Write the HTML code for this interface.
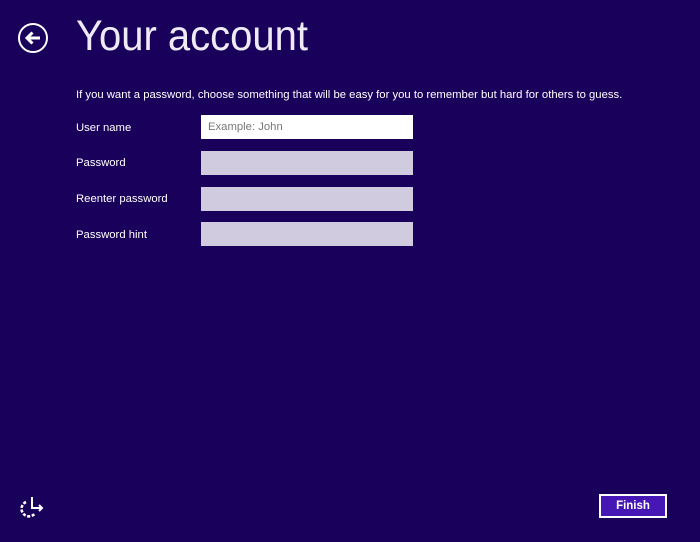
<!DOCTYPE html>
<html><head><style>
body{margin:0;width:700px;height:542px;background:#19005a;font-family:"Liberation Sans",sans-serif;color:#fff;position:relative;overflow:hidden}
.a{position:absolute}
h1{position:absolute;left:76px;top:12px;margin:0;font-weight:normal;font-size:43px;transform:scaleX(0.93);transform-origin:left top;color:#eeeaf6}
.l{position:absolute;left:76px;font-size:11.3px}
.f{position:absolute;left:201px;width:212px;height:24px;background:#d1cbe0}
</style></head><body>
<svg class="a" style="left:17px;top:22px" width="32" height="32" viewBox="0 0 32 32"><circle cx="16" cy="16" r="14" fill="none" stroke="#fff" stroke-width="2"/><path d="M23 16H10M15.5 10.5L10 16l5.5 5.5" fill="none" stroke="#fff" stroke-width="3"/></svg>
<h1>Your account</h1>
<div class="l" style="top:89px">If you want a password, choose something that will be easy for you to remember but hard for others to guess.</div>
<div class="l" style="top:122px">User name</div>
<div class="l" style="top:157px">Password</div>
<div class="l" style="top:193px">Reenter password</div>
<div class="l" style="top:229px">Password hint</div>
<div class="f" style="top:115px;background:#fff;color:#777;font-size:11.3px;line-height:25px;box-sizing:border-box;padding-left:7px">Example: John</div>
<div class="f" style="top:151px"></div>
<div class="f" style="top:187px"></div>
<div class="f" style="top:222px"></div>
<svg class="a" style="left:20px;top:494px" width="26" height="26" viewBox="0 0 26 26"><path d="M6 8A7.5 7.5 0 1 0 14.5 20" fill="none" stroke="#fff" stroke-width="2.6" stroke-dasharray="3 1.6"/><path d="M12 3V14H22M19 11l3 3-3 3" fill="none" stroke="#fff" stroke-width="2"/></svg>
<div class="a" style="left:599px;top:494px;width:68px;height:24px;box-sizing:border-box;border:2px solid #fff;background:#4617b4;font-size:11.5px;font-weight:bold;text-align:center;line-height:21px">Finish</div>
</body></html>
